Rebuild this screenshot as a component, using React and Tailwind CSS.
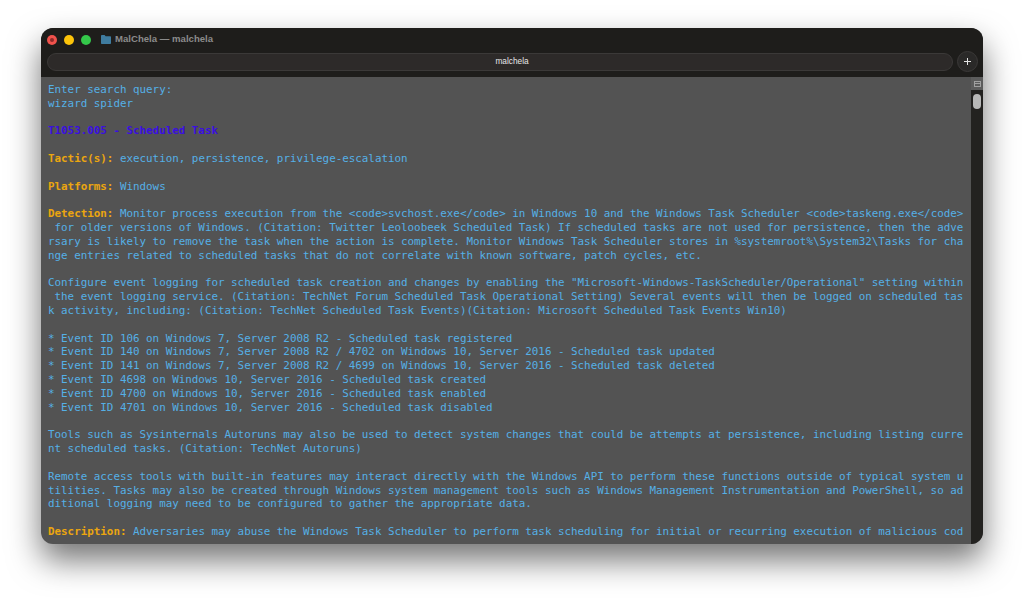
const lines = [
  [["Enter search query:", "t"]],
  [["wizard spider", "t"]],
  [],
  [["T1053.005 - Scheduled Task", "h"]],
  [],
  [["Tactic(s):", "o"], [" execution, persistence, privilege-escalation", "t"]],
  [],
  [["Platforms:", "o"], [" Windows", "t"]],
  [],
  [["Detection:", "o"], [" Monitor process execution from the <code>svchost.exe</code> in Windows 10 and the Windows Task Scheduler <code>taskeng.exe</code>", "t"]],
  [[" for older versions of Windows. (Citation: Twitter Leoloobeek Scheduled Task) If scheduled tasks are not used for persistence, then the adve", "t"]],
  [["rsary is likely to remove the task when the action is complete. Monitor Windows Task Scheduler stores in %systemroot%\\System32\\Tasks for cha", "t"]],
  [["nge entries related to scheduled tasks that do not correlate with known software, patch cycles, etc.", "t"]],
  [],
  [["Configure event logging for scheduled task creation and changes by enabling the \"Microsoft-Windows-TaskScheduler/Operational\" setting within", "t"]],
  [[" the event logging service. (Citation: TechNet Forum Scheduled Task Operational Setting) Several events will then be logged on scheduled tas", "t"]],
  [["k activity, including: (Citation: TechNet Scheduled Task Events)(Citation: Microsoft Scheduled Task Events Win10)", "t"]],
  [],
  [["* Event ID 106 on Windows 7, Server 2008 R2 - Scheduled task registered", "t"]],
  [["* Event ID 140 on Windows 7, Server 2008 R2 / 4702 on Windows 10, Server 2016 - Scheduled task updated", "t"]],
  [["* Event ID 141 on Windows 7, Server 2008 R2 / 4699 on Windows 10, Server 2016 - Scheduled task deleted", "t"]],
  [["* Event ID 4698 on Windows 10, Server 2016 - Scheduled task created", "t"]],
  [["* Event ID 4700 on Windows 10, Server 2016 - Scheduled task enabled", "t"]],
  [["* Event ID 4701 on Windows 10, Server 2016 - Scheduled task disabled", "t"]],
  [],
  [["Tools such as Sysinternals Autoruns may also be used to detect system changes that could be attempts at persistence, including listing curre", "t"]],
  [["nt scheduled tasks. (Citation: TechNet Autoruns)", "t"]],
  [],
  [["Remote access tools with built-in features may interact directly with the Windows API to perform these functions outside of typical system u", "t"]],
  [["tilities. Tasks may also be created through Windows system management tools such as Windows Management Instrumentation and PowerShell, so ad", "t"]],
  [["ditional logging may need to be configured to gather the appropriate data.", "t"]],
  [],
  [["Description:", "o"], [" Adversaries may abuse the Windows Task Scheduler to perform task scheduling for initial or recurring execution of malicious cod", "t"]],
];

const styles = {
  t: "text-[#55b0e6]",
  o: "text-[#eba60f] font-bold",
  h: "text-[#3a0fe0] font-bold",
};

export default function App() {
  return (
    <div className="w-[1024px] h-[598px] bg-white pt-[28px] pl-[41px] overflow-hidden">
      <div className="w-[942px] h-[516px] rounded-[12px] overflow-hidden flex flex-col bg-[#535353] shadow-[0_16px_32px_rgba(0,0,0,0.55)] font-['DejaVu_Sans_Mono',monospace]">
        <div className="h-[49px] shrink-0 bg-[#1e1d1b] flex flex-col">
          <div className="h-[23px] shrink-0 flex items-center pl-[6px]">
            <span className="w-[10px] h-[10px] rounded-full bg-[#f0524c] flex items-center justify-center">
              <span className="w-[4px] h-[4px] rounded-full bg-[#8f2a2a]" />
            </span>
            <span className="w-[10px] h-[10px] rounded-full bg-[#fdc40a] ml-[7px]" />
            <span className="w-[10px] h-[10px] rounded-full bg-[#34c84a] ml-[7px]" />
            <svg className="ml-[10px]" width="10" height="9" viewBox="0 0 10 9">
              <path d="M0 1.2C0 .5.4 0 1 0h2.6l1 1.2H9c.6 0 1 .4 1 1V8c0 .6-.4 1-1 1H1c-.6 0-1-.4-1-1z" fill="#3f7c9f" />
            </svg>
            <span className="ml-[4px] text-[9.6px] font-bold text-[#8b8b8b] font-['Liberation_Sans',sans-serif]">MalChela — malchela</span>
          </div>
          <div className="flex items-center pl-[6px] pr-[5px] gap-[4px]">
            <div className="flex-1 h-[18px] rounded-full bg-[#2d2a29] border border-[#3b3938] flex items-center justify-center pl-[24px] text-[8.3px] text-[#e8e8e8] font-['Liberation_Sans',sans-serif]">
              malchela
            </div>
            <div className="w-[21px] h-[21px] rounded-full bg-[#2a2928] border border-[#3b3938] flex items-center justify-center">
              <svg width="9" height="9" viewBox="0 0 9 9">
                <path d="M4.5 1v7M1 4.5h7" stroke="#e4e4e4" strokeWidth="1" />
              </svg>
            </div>
          </div>
        </div>
        <div className="flex-1 flex min-h-0">
          <div className="flex-1 min-w-0 overflow-hidden pt-[6px] pl-[7px] text-[10.87px] leading-[13.82px]">
            {lines.map((parts, i) => (
              <div key={i} className="h-[13.82px] whitespace-pre">
                {parts.map(([text, kind], j) => (
                  <span key={j} className={styles[kind]}>{text}</span>
                ))}
              </div>
            ))}
          </div>
          <div className="w-[12px] shrink-0 flex flex-col">
            <div className="h-[13px] bg-[#5c5c5c] flex items-center justify-center">
              <div className="w-[7px] h-[6px] border border-[#a0a0a0] flex items-center">
                <div className="w-full h-[1px] bg-[#a0a0a0]" />
              </div>
            </div>
            <div className="flex-1 bg-[#232220] pt-[4px] flex justify-center">
              <div className="w-[8px] h-[15px] rounded-full bg-[#b8b8b8]" />
            </div>
          </div>
        </div>
      </div>
    </div>
  );
}
